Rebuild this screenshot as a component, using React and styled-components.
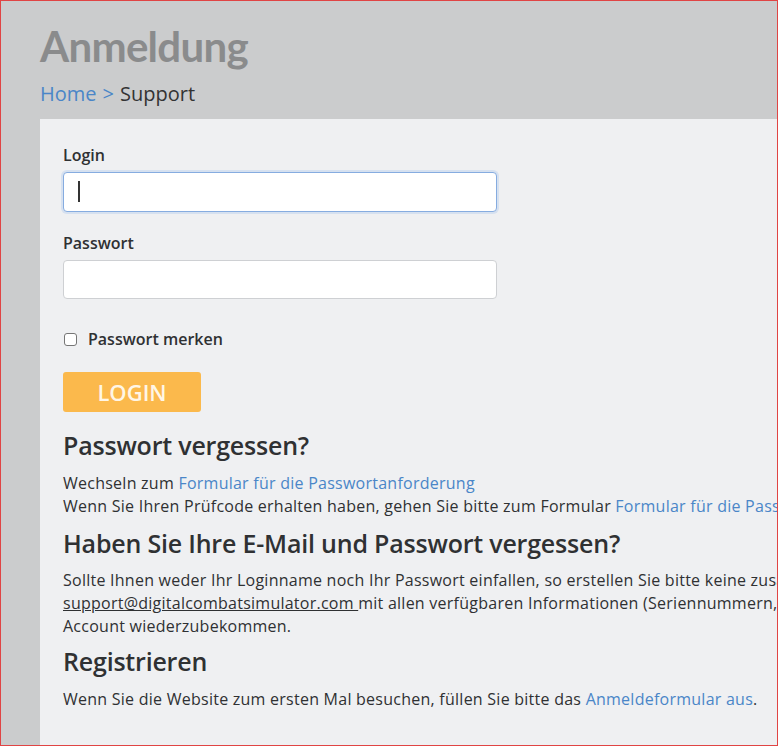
import React from "react";
import styled, { createGlobalStyle } from "styled-components";

const GlobalStyle = createGlobalStyle`
  html, body {
    margin: 0;
    padding: 0;
    background: #cbcccd;
  }
  body {
    font-family: "Open Sans", "Noto Sans", sans-serif;
    color: #2f3133;
  }
`;

const Frame = styled.div`
  box-sizing: border-box;
  width: 778px;
  height: 746px;
  border: 1px solid #e04444;
  background: #cbcccd;
  overflow: hidden;
`;

const Header = styled.header`
  padding: 20px 0 0 39px;
`;

const Title = styled.h1`
  margin: 0;
  font-family: Lato, "Open Sans", sans-serif;
  font-size: 42px;
  line-height: 50px;
  font-weight: 700;
  letter-spacing: -0.7px;
  color: #8a8b8c;
`;

const Breadcrumb = styled.nav`
  margin-top: 9px;
  font-size: 20px;
  line-height: 28px;
  color: #333;
  display: flex;
  gap: 6px;
`;

const Crumb = styled.a`
  color: ${({ current }) => (current ? "#333" : "#4a86c8")};
  text-decoration: none;
`;

const Panel = styled.main`
  box-sizing: border-box;
  width: 1100px;
  min-height: 640px;
  margin: 11px 0 0 39px;
  padding: 24px 23px;
  background: #eff0f2;
`;

const Field = styled.div`
  display: flex;
  flex-direction: column;
  gap: 5px;
  margin-bottom: ${({ last }) => (last ? "0" : "19px")};
`;

const Label = styled.label`
  font-size: 16px;
  line-height: 24px;
  font-weight: 600;
  color: #2f3133;
`;

const InputBox = styled.div`
  position: relative;
  width: 434px;
`;

const Input = styled.input`
  box-sizing: border-box;
  width: 100%;
  height: ${({ focused }) => (focused ? "40px" : "39px")};
  padding: 0 14px;
  border-radius: 4px;
  border: 1px solid ${({ focused }) => (focused ? "#86ace0" : "#ced0d3")};
  box-shadow: ${({ focused }) =>
    focused ? "0 0 0 2px rgba(140, 180, 235, 0.25)" : "none"};
  background: #fff;
  outline: none;
  font-family: inherit;
  font-size: 16px;
`;

const Caret = styled.span`
  position: absolute;
  left: 15px;
  top: 9px;
  width: 2px;
  height: 21px;
  background: #333;
`;

const CheckRow = styled.label`
  display: flex;
  align-items: center;
  gap: 11px;
  margin-top: 28px;
  font-size: 16px;
  line-height: 24px;
  font-weight: 600;
  color: #2f3133;
`;

const CheckBox = styled.span`
  box-sizing: border-box;
  width: 13px;
  height: 13px;
  margin-left: 1px;
  border: 1px solid #767676;
  border-radius: 3px;
  background: #fff;
`;

const LoginButton = styled.button`
  display: block;
  width: 138px;
  height: 40px;
  margin-top: 21px;
  border: none;
  border-radius: 3px;
  background: #fbb94c;
  color: #fff6e6;
  font-family: inherit;
  font-size: 22px;
  font-weight: 600;
  text-transform: uppercase;
  padding: 0;
`;

const Heading = styled.h2`
  margin: ${({ top }) => top}px 0 0;
  font-size: 25px;
  line-height: 30px;
  font-weight: 600;
  letter-spacing: -0.2px;
  color: #2f3133;
  white-space: nowrap;
`;

const Text = styled.p`
  margin: ${({ top }) => top}px 0 0;
  font-size: 16px;
  line-height: 23px;
  letter-spacing: 0.25px;
  color: #2f3133;
  white-space: nowrap;
`;

const Link = styled.a`
  color: #4a86c8;
  text-decoration: none;
`;

const MailLink = styled.a`
  color: #2f3133;
  text-decoration: underline;
`;

export default function App() {
  return (
    <>
      <GlobalStyle />
      <Frame>
        <Header>
          <Title>Anmeldung</Title>
          <Breadcrumb>
            <Crumb href="#">Home</Crumb>
            <Crumb href="#">&gt;</Crumb>
            <Crumb current>Support</Crumb>
          </Breadcrumb>
        </Header>
        <Panel>
          <Field>
            <Label>Login</Label>
            <InputBox>
              <Input focused type="text" />
              <Caret />
            </InputBox>
          </Field>
          <Field last>
            <Label>Passwort</Label>
            <InputBox>
              <Input type="password" />
            </InputBox>
          </Field>
          <CheckRow>
            <CheckBox />
            Passwort merken
          </CheckRow>
          <LoginButton>Login</LoginButton>

          <Heading top={18}>Passwort vergessen?</Heading>
          <Text top={12}>
            Wechseln zum <Link href="#">Formular für die Passwortanforderung</Link>
            <br />
            Wenn Sie Ihren Prüfcode erhalten haben, gehen Sie bitte zum Formular{" "}
            <Link href="#">Formular für die Passwortbestätigung</Link>
          </Text>

          <Heading top={10}>Haben Sie Ihre E-Mail und Passwort vergessen?</Heading>
          <Text top={11}>
            Sollte Ihnen weder Ihr Loginname noch Ihr Passwort einfallen, so erstellen
            Sie bitte keine zusätzlichen Accounts, sondern schreiben Sie an
            <br />
            <MailLink href="#">support@digitalcombatsimulator.com </MailLink>
            mit allen verfügbaren Informationen (Seriennummern, Bestellnummern), um Ihren
            <br />
            Account wiederzubekommen.
          </Text>

          <Heading top={8}>Registrieren</Heading>
          <Text top={12}>
            Wenn Sie die Website zum ersten Mal besuchen, füllen Sie bitte das{" "}
            <Link href="#">Anmeldeformular aus</Link>.
          </Text>
        </Panel>
      </Frame>
    </>
  );
}
